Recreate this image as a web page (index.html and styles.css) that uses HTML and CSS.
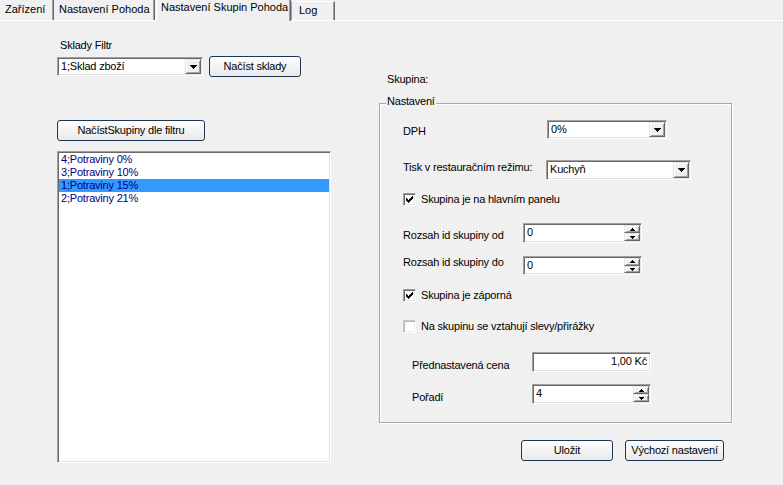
FILE: index.html
```html
<!DOCTYPE html>
<html lang="cs">
<head>
<meta charset="utf-8">
<title>Nastavení Skupin Pohoda</title>
<link rel="stylesheet" href="styles.css">
</head>
<body>
<div class="tabs">
  <div class="tab t1">Zařízení</div>
  <div class="tab t2">Nastavení Pohoda</div>
  <div class="tab active">Nastavení Skupin Pohoda</div>
  <div class="tab last">Log</div>
</div>
<div class="page">
  <div class="left">
    <div class="lbl-top">Sklady Filtr</div>
    <div class="filter-row">
      <div class="combo w-sklad">
        <span class="combo-text">1;Sklad zboží</span>
        <span class="drop"><svg width="7" height="4" viewBox="0 0 7 4"><path d="M0 0h7v1h-1v1h-1v1h-1v1h-1v-1h-1v-1h-1v-1h-1z" fill="#000"/></svg></span>
      </div>
      <button class="btn w-nacist">Načíst sklady</button>
    </div>
    <button class="btn w-skupiny">NačístSkupiny dle filtru</button>
    <ul class="list">
      <li>4;Potraviny 0%</li>
      <li>3;Potraviny 10%</li>
      <li class="sel">1;Potraviny 15%</li>
      <li>2;Potraviny 21%</li>
    </ul>
  </div>
  <div class="right">
    <div class="skupina">Skupina:</div>
    <div class="group">
      <div class="legend">Nastavení</div>

      <div class="row r-dph">
        <span class="lab lab-dph">DPH</span>
        <div class="combo w-dph">
          <span class="combo-text">0%</span>
          <span class="drop"><svg width="7" height="4" viewBox="0 0 7 4"><path d="M0 0h7v1h-1v1h-1v1h-1v1h-1v-1h-1v-1h-1v-1h-1z" fill="#000"/></svg></span>
        </div>
      </div>

      <div class="row r-tisk">
        <span class="lab lab-tisk">Tisk v restauračním režimu:</span>
        <div class="combo w-tisk">
          <span class="combo-text">Kuchyň</span>
          <span class="drop"><svg width="7" height="4" viewBox="0 0 7 4"><path d="M0 0h7v1h-1v1h-1v1h-1v1h-1v-1h-1v-1h-1v-1h-1z" fill="#000"/></svg></span>
        </div>
      </div>

      <div class="row check-row r-cb1">
        <span class="cb"><svg width="7" height="7" viewBox="0 0 7 7"><path d="M0 2h1v3h-1zM1 3h1v3h-1zM2 4h1v3h-1zM3 3h1v3h-1zM4 2h1v3h-1zM5 1h1v3h-1zM6 0h1v3h-1z" fill="#000"/></svg></span>
        <span class="cb-lab">Skupina je na hlavním panelu</span>
      </div>

      <div class="row r-od">
        <span class="lab lab-od">Rozsah id skupiny od</span>
        <div class="spin w-spin h20">
          <span class="spin-text">0</span>
          <span class="spin-btns">
            <span class="sb"><svg width="5" height="3" viewBox="0 0 5 3"><path d="M2 0h1v1h1v1h1v1h-5v-1h1v-1h1z" fill="#000"/></svg></span>
            <span class="sb"><svg width="5" height="3" viewBox="0 0 5 3"><path d="M0 0h5v1h-1v1h-1v1h-1v-1h-1v-1h-1z" fill="#000"/></svg></span>
          </span>
        </div>
      </div>

      <div class="row r-do">
        <span class="lab lab-do">Rozsah id skupiny do</span>
        <div class="spin w-spin">
          <span class="spin-text">0</span>
          <span class="spin-btns">
            <span class="sb"><svg width="5" height="3" viewBox="0 0 5 3"><path d="M2 0h1v1h1v1h1v1h-5v-1h1v-1h1z" fill="#000"/></svg></span>
            <span class="sb"><svg width="5" height="3" viewBox="0 0 5 3"><path d="M0 0h5v1h-1v1h-1v1h-1v-1h-1v-1h-1z" fill="#000"/></svg></span>
          </span>
        </div>
      </div>

      <div class="row check-row r-cb2">
        <span class="cb"><svg width="7" height="7" viewBox="0 0 7 7"><path d="M0 2h1v3h-1zM1 3h1v3h-1zM2 4h1v3h-1zM3 3h1v3h-1zM4 2h1v3h-1zM5 1h1v3h-1zM6 0h1v3h-1z" fill="#000"/></svg></span>
        <span class="cb-lab">Skupina je záporná</span>
      </div>

      <div class="row check-row r-cb3">
        <span class="cb off"></span>
        <span class="cb-lab">Na skupinu se vztahují slevy/přirážky</span>
      </div>

      <div class="row r-cena">
        <span class="lab lab-cena">Přednastavená cena</span>
        <div class="tb w-cena">1,00 Kč</div>
      </div>

      <div class="row r-poradi">
        <span class="lab lab-cena">Pořadí</span>
        <div class="spin w-poradi h20">
          <span class="spin-text">4</span>
          <span class="spin-btns">
            <span class="sb"><svg width="5" height="3" viewBox="0 0 5 3"><path d="M2 0h1v1h1v1h1v1h-5v-1h1v-1h1z" fill="#000"/></svg></span>
            <span class="sb"><svg width="5" height="3" viewBox="0 0 5 3"><path d="M0 0h5v1h-1v1h-1v1h-1v-1h-1v-1h-1z" fill="#000"/></svg></span>
          </span>
        </div>
      </div>
    </div>
    <div class="actions">
      <button class="btn w-ulozit">Uložit</button>
      <button class="btn w-vychozi">Výchozí nastavení</button>
    </div>
  </div>
</div>
</body>
</html>
```
FILE: styles.css
```css
* { box-sizing: border-box; }
html, body { margin: 0; padding: 0; }
body {
  background: #f0f0f0;
  font-family: "Liberation Sans", Arial, sans-serif;
  font-size: 11px;
  line-height: 13px;
  letter-spacing: -0.2px;
  color: #000;
  width: 783px;
  height: 485px;
  overflow: hidden;
}

/* tabs */
.tabs {
  display: flex;
  height: 21px;
  border-bottom: 1px solid #fff;
  letter-spacing: 0;
}
.tab {
  flex: none;
  padding: 3px 0 0 5px;
  border-right: 1px solid #696969;
  box-shadow: inset -1px 0 #a0a0a0;
  white-space: nowrap;
}
.tab.t1 { width: 54px; }
.tab.t2 { width: 101px; margin-left: 0; }
.tab.active {
  width: 135px;
  margin-left: 1px;
  padding: 1px 0 0 4px;
  margin-bottom: -1px;
  border-left: 1px solid #fff;
  background: #f0f0f0;
}
.tab.last {
  width: 44px;
  padding: 2px 0 0 7px;
  margin-top: 1px;
  border-top: 1px solid #fff;
  border-left: 1px solid #a0a0a0;
}

/* layout */
.page {
  display: flex;
  padding-left: 57px;
}
.left {
  width: 274px;
  display: flex;
  flex-direction: column;
  align-items: flex-start;
}
.right {
  width: 353px;
  margin-left: 48px;
}

/* left column */
.lbl-top { margin: 18px 0 0 3px; }
.filter-row {
  display: flex;
  align-items: center;
  gap: 6px;
  margin-top: 4px;
}
.w-sklad { width: 146px; }
.w-nacist { width: 92px; }
.w-skupiny { width: 148px; margin-top: 43px; }

.list {
  list-style: none;
  margin: 10px 0 0;
  padding: 1px;
  width: 274px;
  height: 312px;
  background: #fff;
  border: 1px solid;
  border-color: #a0a0a0 #fff #fff #a0a0a0;
  box-shadow: inset 1px 1px #696969, inset -1px -1px #e3e3e3;
  color: #000080;
}
.list li {
  height: 13px;
  line-height: 13px;
  padding-left: 2px;
}
.list li.sel { background: #3399ff; }

/* controls */
.btn {
  font: inherit;
  letter-spacing: inherit;
  color: #000;
  height: 21px;
  padding: 0;
  border: 1px solid #1e3653;
  border-radius: 3px;
  background: linear-gradient(#fdfdfd, #e9e9e9);
}

.combo, .spin, .tb {
  display: flex;
  height: 19px;
  background: #fff;
  border: 1px solid;
  border-color: #a0a0a0 #fff #fff #a0a0a0;
  box-shadow: inset 1px 1px #696969, inset -1px -1px #e3e3e3;
  padding: 1px;
}
.h20 { height: 20px; }
.combo-text, .spin-text {
  flex: 1;
  padding-left: 2px;
  line-height: 15px;
}
.drop {
  width: 16px;
  background: #f0f0f0;
  border: 1px solid;
  border-color: #e3e3e3 #696969 #696969 #e3e3e3;
  box-shadow: inset 1px 1px #fff, inset -1px -1px #a0a0a0;
  display: flex;
  align-items: center;
  justify-content: center;
}
.spin-btns {
  width: 16px;
  display: flex;
  flex-direction: column;
}
.sb {
  flex: 1;
  background: #f0f0f0;
  border: 1px solid;
  border-color: #e3e3e3 #696969 #696969 #e3e3e3;
  box-shadow: inset 1px 1px #fff, inset -1px -1px #a0a0a0;
  display: flex;
  align-items: center;
  justify-content: center;
}
.tb {
  justify-content: flex-end;
  padding-right: 3px;
  line-height: 15px;
  height: 20px;
}

/* right column */
.skupina { margin-top: 52px; padding-left: 8px; }
.group {
  margin-top: 17px;
  border: 1px solid #a8a8a8;
  box-shadow: 1px 1px #fff, inset 1px 1px #fff;
  padding: 0 0 18px 23px;
  height: 320px;
}
.legend {
  width: fit-content;
  margin: -9px 0 0 -17px;
  padding: 0 1px;
  background: #f0f0f0;
}
.row { display: flex; align-items: flex-start; }
.lab { flex: none; }

.r-dph { margin-top: 12px; }
.lab-dph { width: 144px; margin-top: 5px; }
.w-dph { width: 120px; }

.r-tisk { margin-top: 21px; }
.lab-tisk { width: 143px; margin-top: 1px; }
.w-tisk { width: 145px; height: 20px; }

.check-row { align-items: center; gap: 5px; }
.r-cb1 { margin-top: 13px; }
.r-cb2 { margin-top: 14px; }
.r-cb3 { margin-top: 18px; }
.cb {
  width: 13px;
  height: 13px;
  background: #fff;
  border: 1px solid;
  border-color: #a0a0a0 #fff #fff #a0a0a0;
  box-shadow: inset 1px 1px #696969, inset -1px -1px #e3e3e3;
  display: flex;
  align-items: center;
  justify-content: center;
  flex: none;
}
.cb.off {
  border-color: #c8c8c8 #fff #fff #c8c8c8;
  box-shadow: inset 1px 1px #b4b4b4, inset -1px -1px #ececec;
}

.r-od { margin-top: 17px; }
.lab-od { width: 120px; margin-top: 6px; }
.r-do { margin-top: 13px; }
.lab-do { width: 120px; margin-top: 0; }
.w-spin { width: 119px; }

.r-cena { margin-top: 19px; }
.lab-cena { width: 120px; margin: 7px 0 0 9px; }
.w-cena { width: 119px; }
.r-poradi { margin-top: 12px; }
.w-poradi { width: 119px; }

.actions {
  display: flex;
  gap: 12px;
  margin-top: 17px;
  padding-left: 142px;
}
.w-ulozit { width: 92px; }
.w-vychozi { width: 99px; }
```
